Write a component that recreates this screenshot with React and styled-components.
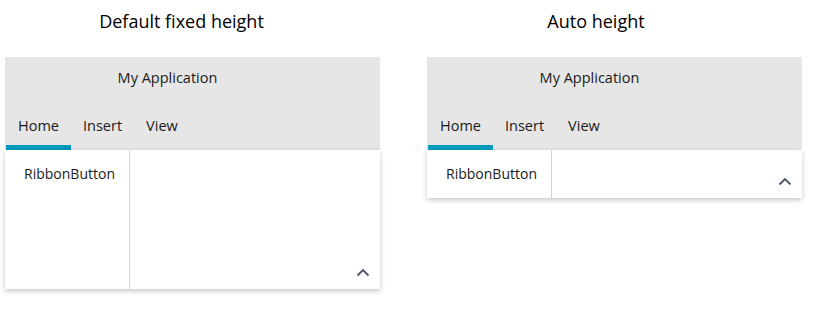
import React from 'react';
import styled, { createGlobalStyle } from 'styled-components';

const Global = createGlobalStyle`
	body {
		margin: 0;
		background: #fff;
		font-family: "Open Sans", "Noto Sans", sans-serif;
		color: #1a1a1a;
	}
`

const Page = styled.div`
	display: flex;
	gap: 47px;
	padding: 0 5px 20px;
`

const Column = styled.div`
	width: 375px;
	display: flex;
	flex-direction: column;
`

const Title = styled.div`
	height: 57px;
	padding-top: 9px;
	box-sizing: border-box;
	text-align: center;
	padding-right: ${props => props.offset}px;
	font-size: 18px;
	color: #000;
`

const Header = styled.div`
	background: #e6e6e6;
	height: 93px;
	display: flex;
	flex-direction: column;
`

const AppTitle = styled.div`
	height: 41px;
	display: flex;
	align-items: center;
	justify-content: center;
	padding-right: 50px;
	font-size: 14.5px;
`

const Tabs = styled.div`
	margin-top: auto;
	display: flex;
	padding-left: 1px;
`

const Tab = styled.div`
	height: 51px;
	box-sizing: border-box;
	padding: 7px 12px 0;
	display: flex;
	align-items: center;
	font-size: 14.5px;
	border-bottom: 5px solid ${props => props.active ? '#0099bc' : 'transparent'};
`

const Content = styled.div`
	background: #fff;
	height: ${props => props.height}px;
	display: flex;
	box-shadow: 0 2px 5px rgba(0, 0, 0, 0.22);
	position: relative;
`

const Group = styled.div`
	width: 125px;
	border-right: 1px solid #d0d0d0;
	padding: 14px 0 0 5px;
	box-sizing: border-box;
	text-align: center;
	font-size: 14px;
`

const Collapse = styled.button`
	position: absolute;
	right: 10px;
	bottom: 12px;
	border: 0;
	background: none;
	padding: 0;
	display: flex;
	cursor: pointer;
`

const Chevron = () => (
	<svg width="14" height="9" viewBox="0 0 14 9">
		<path d="M1.5 7.5 L7 2 L12.5 7.5" fill="none" stroke="#4a5563" strokeWidth="1.8" />
	</svg>
)

const Ribbon = ({ height }) => (
	<div>
		<Header>
			<AppTitle>My Application</AppTitle>
			<Tabs>
				<Tab active>Home</Tab>
				<Tab>Insert</Tab>
				<Tab>View</Tab>
			</Tabs>
		</Header>
		<Content height={height}>
			<Group>RibbonButton</Group>
			<Collapse><Chevron /></Collapse>
		</Content>
	</div>
)

export default function App() {
	return (
		<Page>
			<Global />
			<Column>
				<Title offset={22}>Default fixed height</Title>
				<Ribbon height={139} />
			</Column>
			<Column>
				<Title offset={37}>Auto height</Title>
				<Ribbon height={48} />
			</Column>
		</Page>
	)
}
